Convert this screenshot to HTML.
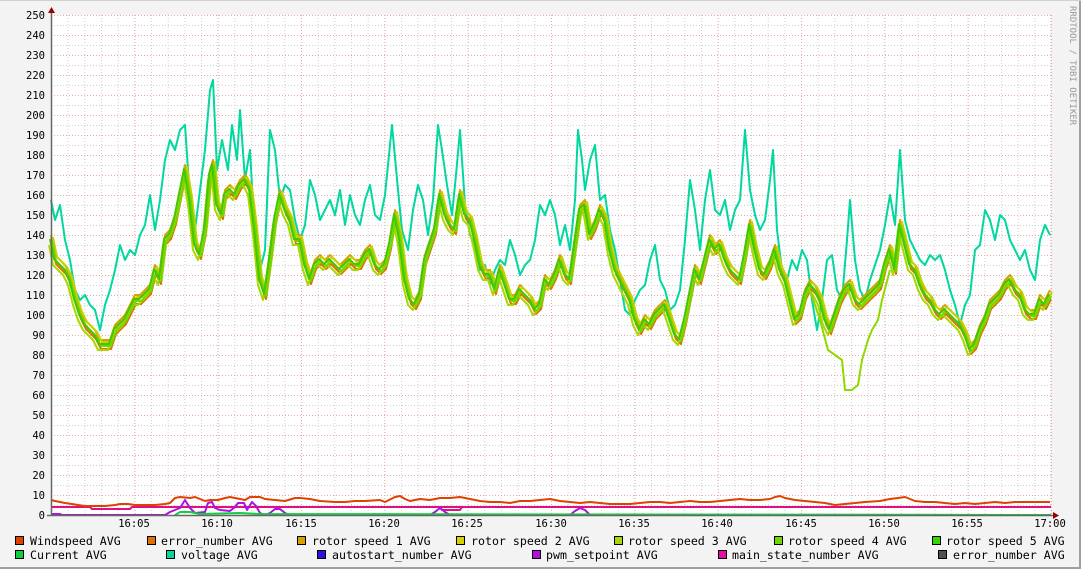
<!DOCTYPE html>
<html><head><meta charset="utf-8"><style>
html,body{margin:0;padding:0;background:#f3f3f3}
svg{display:block}
text{font-family:"DejaVu Sans Mono","Liberation Mono",monospace;font-size:10.5px;fill:#000}
text.lg{font-size:11.6px}
text.rr{font-size:9px;fill:#999}
</style></head><body>
<svg width="1081" height="569" xmlns="http://www.w3.org/2000/svg">
<defs>
<pattern id="hmin" x="51" y="15" width="1000" height="10" patternUnits="userSpaceOnUse"><line x1="0" y1="0.5" x2="1000" y2="0.5" stroke="#cfcfcf" stroke-dasharray="1,2"/></pattern>
<pattern id="vmin" x="51" y="15" width="16.6667" height="500" patternUnits="userSpaceOnUse"><line x1="0.5" y1="0" x2="0.5" y2="500" stroke="#cfcfcf" stroke-dasharray="1,2"/></pattern>
<pattern id="hmaj" x="51" y="15" width="1000" height="20" patternUnits="userSpaceOnUse"><line x1="0" y1="0.5" x2="1000" y2="0.5" stroke="#e8a8a8" stroke-dasharray="1,2"/></pattern>
<pattern id="vmaj" x="51" y="15" width="83.3333" height="500" patternUnits="userSpaceOnUse"><line x1="0.5" y1="0" x2="0.5" y2="500" stroke="#e8a8a8" stroke-dasharray="1,2"/></pattern>
<polyline id="g" points="51,240 55,260 60,265 65,270 70,280 75,300 80,315 85,325 90,330 95,335 100,345 105,345 110,345 115,330 120,325 125,320 130,310 135,300 140,300 145,295 150,290 155,270 160,280 165,240 170,235 175,220 180,195 185,170 190,200 195,245 200,255 205,230 210,175 213,165 217,205 222,215 225,195 230,190 235,195 240,185 245,180 250,190 255,230 260,280 265,295 270,260 275,220 280,195 285,210 290,220 295,240 300,240 305,265 310,280 315,265 320,260 325,265 330,260 335,265 340,270 345,265 350,260 355,265 360,265 365,255 370,250 375,265 380,270 385,265 390,245 395,215 400,240 405,280 410,300 415,305 420,295 425,260 430,245 435,230 440,195 445,215 450,225 455,230 460,195 465,215 470,220 475,240 480,265 485,275 490,275 495,290 500,270 505,285 510,300 515,300 520,290 525,295 530,300 535,310 540,305 545,280 550,285 555,275 560,260 565,275 570,280 575,245 580,210 585,205 590,235 595,225 600,210 605,220 610,250 615,270 620,280 625,290 630,300 635,320 640,330 645,320 650,325 655,315 660,310 665,305 670,320 675,335 680,340 685,320 690,295 695,270 700,280 705,260 710,240 715,250 720,245 725,260 730,270 735,275 740,280 745,255 750,225 755,250 760,270 765,275 770,265 775,250 780,270 785,280 790,300 795,320 800,315 805,295 810,285 815,290 820,300 825,320 830,330 835,315 840,300 845,290 850,285 855,300 860,305 865,300 870,295 875,290 880,285 885,265 890,250 895,270 900,225 905,245 910,265 915,270 920,285 925,295 930,300 935,310 940,315 945,310 950,315 955,320 960,325 965,335 970,350 975,345 980,330 985,320 990,305 995,300 1000,295 1005,285 1010,280 1015,290 1020,295 1025,310 1030,315 1035,315 1040,300 1045,305 1050,295"/>
</defs>
<rect x="0" y="0" width="1081" height="569" fill="#f3f3f3"/>
<rect x="1079" y="0" width="2" height="569" fill="#a0a0a0"/>
<rect x="0" y="567" width="1081" height="2" fill="#a0a0a0"/>
<rect x="0" y="0" width="1081" height="1" fill="#d0d0d0"/>
<rect x="51" y="15" width="1000" height="500" fill="#fff"/>
<rect x="51" y="15" width="1000" height="500" fill="url(#hmin)"/>
<rect x="51" y="15" width="1000" height="500" fill="url(#vmin)"/>
<rect x="51" y="15" width="1000" height="500" fill="url(#hmaj)"/>
<rect x="51" y="15" width="1001" height="500" fill="url(#vmaj)"/>

<g fill="none" stroke-width="2" stroke-linejoin="round">
<polyline stroke="#00d8a0" points="51,200 55,220 60,205 65,240 70,260 75,290 80,300 85,295 90,305 95,310 100,330 105,305 110,290 115,270 120,245 125,260 130,250 135,255 140,235 145,225 150,195 155,230 160,200 165,160 170,140 175,150 180,130 185,125 190,200 195,230 200,190 205,150 210,90 213,80 217,170 222,140 228,170 232,125 237,160 240,110 245,180 250,150 255,240 260,270 265,250 270,130 275,150 280,200 285,185 290,190 295,220 300,240 305,225 310,180 315,195 320,220 325,210 330,200 335,215 340,190 345,225 350,195 355,215 360,225 365,200 370,185 375,215 380,220 385,195 392,125 398,190 402,230 408,250 413,210 418,185 423,200 428,235 433,200 438,125 442,150 447,185 452,215 456,175 460,130 465,205 470,235 475,245 480,270 485,265 490,285 495,270 500,260 505,265 510,240 515,255 520,275 525,265 530,260 535,240 540,205 545,215 550,200 555,215 560,245 565,225 570,250 575,200 578,130 582,160 585,190 590,160 595,145 600,200 605,195 610,230 615,250 620,280 625,310 630,315 635,300 640,290 645,285 650,260 655,245 660,280 665,290 670,310 675,305 680,290 685,240 690,180 695,210 700,250 705,200 710,170 715,210 720,215 725,200 730,230 735,210 740,200 745,130 750,190 755,215 760,230 765,220 770,180 773,150 777,230 782,270 787,280 792,260 797,270 802,250 807,260 812,300 817,330 822,300 827,260 832,255 837,290 842,300 847,240 850,200 855,260 860,290 865,300 870,280 875,265 880,250 885,225 890,195 895,225 900,150 905,220 910,240 915,250 920,260 925,265 930,255 935,260 940,255 945,270 950,290 955,305 960,325 965,305 970,295 975,250 980,245 985,210 990,220 995,240 1000,215 1005,220 1010,240 1015,250 1020,260 1025,250 1030,270 1035,280 1040,240 1045,225 1050,235"/>
<use href="#g" stroke="#e07000" transform="translate(1,4)"/>
<use href="#g" stroke="#d8a000" transform="translate(0,-5)"/>
<use href="#g" stroke="#c8d000" transform="translate(2,-3)"/>
<use href="#g" stroke="#a8d800" transform="translate(-2,5)"/>
<use href="#g" stroke="#70d800" transform="translate(1,1)"/>
<use href="#g" stroke="#40c800" transform="translate(-1,-1)"/>
<polyline stroke="#90d800" points="810,290 820,320 828,350 835,355 842,360 845,390 852,390 858,385 862,360 868,340 872,330 878,320 882,300 890,270"/>
<polyline stroke="#e01080" points="51,507 90,507 92,509 130,509 132,507 1051,507"/>
<polyline stroke="#e01080" points="440,507 442,510 460,510 462,507"/>
<polyline stroke="#b010e0" points="51,514 60,514 62,515 165,515 170,512 180,508 185,500 190,508 195,513 205,512 208,503 212,502 215,508 220,510 230,511 235,507 238,503 244,503 247,510 250,505 252,502 256,506 260,513 265,515 270,513 275,509 280,509 285,513 290,515 430,515 435,512 440,508 445,512 450,515 570,515 575,511 580,508 585,510 590,515 1051,515"/>
<polyline stroke="#10d040" points="175,515 180,512 190,512 200,514 240,513 260,514 1051,515"/>
<polyline stroke="#e04000" points="51,500 55,501 60,502 65,503 72,504 78,505 85,506 95,506 105,506 115,505 120,504 128,504 135,505 145,505 155,505 165,504 170,503 175,498 180,497 190,498 195,497 200,499 205,501 210,500 218,500 225,498 230,497 240,499 245,500 250,497 260,497 265,499 275,500 285,501 295,498 300,498 310,499 320,501 335,502 345,502 355,501 365,501 380,500 385,502 395,497 400,496 405,499 410,501 420,499 430,500 440,498 450,498 460,497 470,499 480,501 490,502 500,502 510,503 520,501 530,501 540,500 550,499 560,501 570,502 580,503 590,502 600,503 610,504 620,504 630,504 640,503 650,502 660,502 670,503 680,502 690,501 700,502 710,502 720,501 730,500 740,499 750,500 760,500 770,499 775,497 780,496 785,498 795,500 805,501 815,502 825,503 835,505 845,504 855,503 865,502 880,501 890,499 898,498 905,497 910,499 915,501 925,502 935,502 945,503 955,504 965,503 975,504 985,503 995,502 1005,503 1015,502 1025,502 1035,502 1050,502"/>
</g>
<line x1="51.5" y1="10" x2="51.5" y2="516" stroke="#666" stroke-width="1.5"/>
<line x1="47" y1="515.5" x2="1054" y2="515.5" stroke="#666" stroke-width="1.5"/>
<polygon points="48,13 51.5,7 55,13" fill="#900"/>
<polygon points="1053,512 1059,515.5 1053,519" fill="#900"/>

<g text-anchor="end">
<text x="45" y="19">250</text><text x="45" y="39">240</text><text x="45" y="59">230</text><text x="45" y="79">220</text><text x="45" y="99">210</text><text x="45" y="119">200</text><text x="45" y="139">190</text><text x="45" y="159">180</text><text x="45" y="179">170</text><text x="45" y="199">160</text><text x="45" y="219">150</text><text x="45" y="239">140</text><text x="45" y="259">130</text><text x="45" y="279">120</text><text x="45" y="299">110</text><text x="45" y="319">100</text><text x="45" y="339">90</text><text x="45" y="359">80</text><text x="45" y="379">70</text><text x="45" y="399">60</text><text x="45" y="419">50</text><text x="45" y="439">40</text><text x="45" y="459">30</text><text x="45" y="479">20</text><text x="45" y="499">10</text><text x="45" y="519">0</text>
</g>
<g text-anchor="middle">
<text x="134" y="527">16:05</text><text x="217" y="527">16:10</text><text x="301" y="527">16:15</text><text x="384" y="527">16:20</text><text x="467" y="527">16:25</text><text x="551" y="527">16:30</text><text x="634" y="527">16:35</text><text x="717" y="527">16:40</text><text x="801" y="527">16:45</text><text x="884" y="527">16:50</text><text x="967" y="527">16:55</text><text x="1050" y="527">17:00</text>
</g>
<text class="rr" x="1070" y="6" transform="rotate(90 1070 6)">RRDTOOL / TOBI OETIKER</text>

<g stroke="#000" stroke-width="1">
<rect x="15.5" y="536.5" width="8" height="8" fill="#e04000"/>
<rect x="147.5" y="536.5" width="8" height="8" fill="#e07000"/>
<rect x="297.5" y="536.5" width="8" height="8" fill="#d8a000"/>
<rect x="456.5" y="536.5" width="8" height="8" fill="#d8d000"/>
<rect x="614.5" y="536.5" width="8" height="8" fill="#a8d800"/>
<rect x="774.5" y="536.5" width="8" height="8" fill="#70d800"/>
<rect x="932.5" y="536.5" width="8" height="8" fill="#30d800"/>
<rect x="15.5" y="550.5" width="8" height="8" fill="#10d040"/>
<rect x="166.5" y="550.5" width="8" height="8" fill="#00d8a0"/>
<rect x="317.5" y="550.5" width="8" height="8" fill="#3010e0"/>
<rect x="532.5" y="550.5" width="8" height="8" fill="#b010e0"/>
<rect x="718.5" y="550.5" width="8" height="8" fill="#e010a0"/>
<rect x="938.5" y="550.5" width="8" height="8" fill="#505050"/>
</g>
<text class="lg" x="30" y="545">Windspeed AVG</text>
<text class="lg" x="161" y="545">error_number AVG</text>
<text class="lg" x="312" y="545">rotor speed 1 AVG</text>
<text class="lg" x="471" y="545">rotor speed 2 AVG</text>
<text class="lg" x="628" y="545">rotor speed 3 AVG</text>
<text class="lg" x="788" y="545">rotor speed 4 AVG</text>
<text class="lg" x="946" y="545">rotor speed 5 AVG</text>
<text class="lg" x="30" y="559">Current AVG</text>
<text class="lg" x="181" y="559">voltage AVG</text>
<text class="lg" x="332" y="559">autostart_number AVG</text>
<text class="lg" x="546" y="559">pwm_setpoint AVG</text>
<text class="lg" x="732" y="559">main_state_number AVG</text>
<text class="lg" x="953" y="559">error_number AVG</text>
</svg>
</body></html>
